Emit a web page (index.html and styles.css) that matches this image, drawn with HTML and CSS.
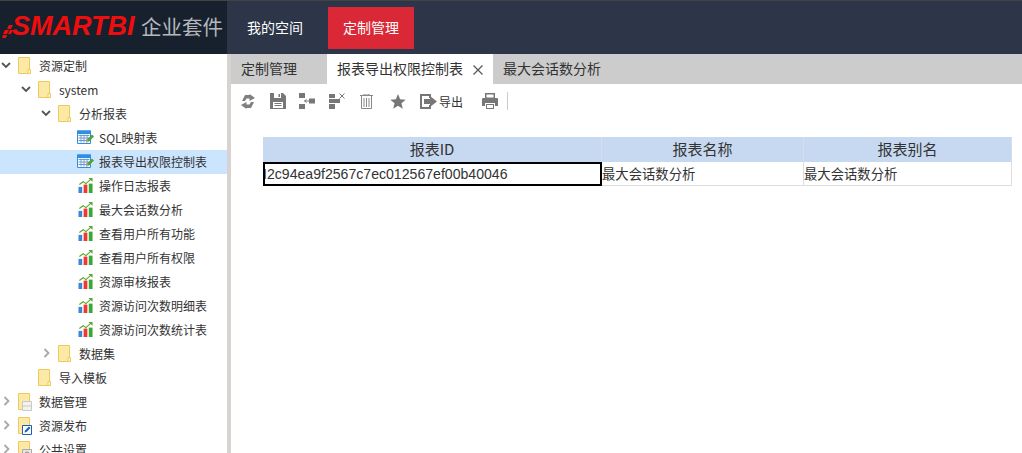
FILE: index.html
```html
<!DOCTYPE html>
<html lang="zh-CN">
<head>
<meta charset="utf-8">
<title>Smartbi</title>
<link rel="stylesheet" href="styles.css">
</head>
<body>
<svg class="defs" width="0" height="0" aria-hidden="true">
  <defs>
    <symbol id="folder" viewBox="0 0 13 17">
      <path d="M.5.5h11v16H.5z" fill="#fde9a6" stroke="#eccb5c"/>
      <path d="M10 12.5h2.500v4H10z" fill="#fff3c9" stroke="#eccb5c"/>
    </symbol>
    <symbol id="grid" viewBox="0 0 17 14">
      <path d="M.5.5h13v12.500H.5z" fill="#fff" stroke="#2e8fe0"/>
      <path d="M0 0h14v3.500H0z" fill="#2e8fe0"/>
      <path d="M1.500 5h11M1.500 7.500h11M1.500 10h11M4 4v8M7 4v8M10 4v8" stroke="#6f9bd6" stroke-width="1"/>
      <path d="M9 12l1-3 5-5 2 2-5 5z" fill="#4aa53a"/>
      <path d="M9 12l1-3 2 2z" fill="#d9a66b"/>
    </symbol>
    <symbol id="chart" viewBox="0 0 15 16">
      <path d="M0 9.500h4V16H0z" fill="#3e86d6"/>
      <path d="M5.500 7h4v9h-4z" fill="#ee3a2e"/>
      <path d="M11 6h4v10h-4z" fill="#3aa53a"/>
      <path d="M1 7l4-3 3 2 5-4.500" fill="none" stroke="#55a82c" stroke-width="1.200"/>
      <path d="M10.500 0H15v4z" fill="#55a82c"/>
    </symbol>
    <symbol id="down" viewBox="0 0 10 6">
      <path d="M1 1l4 4 4-4" fill="none" stroke="#555" stroke-width="1.800"/>
    </symbol>
    <symbol id="right" viewBox="0 0 6 10">
      <path d="M1 1l4 4-4 4" fill="none" stroke="#a8a8a8" stroke-width="1.800"/>
    </symbol>
  </defs>
</svg>

<header class="topbar">
  <div class="brand">
    <svg class="brand-mark" width="14" height="14" viewBox="0 0 14 14" aria-hidden="true">
      <path d="M7 0h4L9 4H5zM3 5h4L5 9H1zM8 5h3L9 9H6zM1 10h4l-1 3H0z" fill="#f00d0d"/>
    </svg>
    <span class="brand-name">SMARTBI</span>
    <span class="brand-suite">企业套件</span>
  </div>
  <nav class="mainnav">
    <a class="mainnav-item">我的空间</a>
    <a class="mainnav-item is-active">定制管理</a>
  </nav>
</header>

<div class="body">
  <aside class="tree">
    <div class="row l0"><svg class="arrow ad"><use href="#down"/></svg><svg class="folder"><use href="#folder"/></svg><span>资源定制</span></div>
    <div class="row l1"><svg class="arrow ad"><use href="#down"/></svg><svg class="folder"><use href="#folder"/></svg><span>system</span></div>
    <div class="row l2"><svg class="arrow ad"><use href="#down"/></svg><svg class="folder"><use href="#folder"/></svg><span>分析报表</span></div>
    <div class="row l3"><svg class="leaf"><use href="#grid"/></svg><span>SQL映射表</span></div>
    <div class="row l3 is-selected"><svg class="leaf"><use href="#grid"/></svg><span>报表导出权限控制表</span></div>
    <div class="row l3"><svg class="leaf"><use href="#chart"/></svg><span>操作日志报表</span></div>
    <div class="row l3"><svg class="leaf"><use href="#chart"/></svg><span>最大会话数分析</span></div>
    <div class="row l3"><svg class="leaf"><use href="#chart"/></svg><span>查看用户所有功能</span></div>
    <div class="row l3"><svg class="leaf"><use href="#chart"/></svg><span>查看用户所有权限</span></div>
    <div class="row l3"><svg class="leaf"><use href="#chart"/></svg><span>资源审核报表</span></div>
    <div class="row l3"><svg class="leaf"><use href="#chart"/></svg><span>资源访问次数明细表</span></div>
    <div class="row l3"><svg class="leaf"><use href="#chart"/></svg><span>资源访问次数统计表</span></div>
    <div class="row l2"><svg class="arrow ar"><use href="#right"/></svg><svg class="folder"><use href="#folder"/></svg><span>数据集</span></div>
    <div class="row l1"><span class="arrow"></span><svg class="folder"><use href="#folder"/></svg><span>导入模板</span></div>
    <div class="row l0"><svg class="arrow ar"><use href="#right"/></svg>
      <span class="stack"><svg class="folder"><use href="#folder"/></svg>
        <svg class="badge" viewBox="0 0 10 10"><path d="M.5.5h9v9h-9z" fill="#f4f2ee" stroke="#c9c9c9"/><path d="M1 5h8" stroke="#c9c9c9"/></svg></span><span>数据管理</span></div>
    <div class="row l0"><svg class="arrow ar"><use href="#right"/></svg>
      <span class="stack"><svg class="folder"><use href="#folder"/></svg>
        <svg class="badge" viewBox="0 0 10 10"><path d="M.5.5h9v9h-9z" fill="#fff" stroke="#1a5fb4"/><path d="M2.500 7.500l.5-2L7 1.500l1.500 1.500-4 4z" fill="#1a5fb4"/></svg></span><span>资源发布</span></div>
    <div class="row l0"><svg class="arrow ar"><use href="#right"/></svg>
      <span class="stack"><svg class="folder"><use href="#folder"/></svg>
        <svg class="badge" viewBox="0 0 10 10"><path d="M.5.5h9v9h-9z" fill="#e6e6e6" stroke="#aaa"/><circle cx="5" cy="5" r="2" fill="none" stroke="#888"/></svg></span><span>公共设置</span></div>
  </aside>
  <div class="splitter"></div>
  <main class="content">
    <div class="tabs">
      <div class="tab">定制管理</div>
      <div class="tab is-active">报表导出权限控制表<svg class="tab-close" width="10" height="10" viewBox="0 0 10 10" aria-hidden="true"><path d="M.5.500l9 9M9.500.500l-9 9" stroke="#555" stroke-width="1.200"/></svg></div>
      <div class="tab">最大会话数分析</div>
    </div>
    <div class="toolbar">
      <svg class="tool t-refresh" width="14" height="15" viewBox="0 0 14 15" aria-hidden="true"><path d="M1 7L4 1h4.500V0L14 4 8.500 7V4.500h-3L4 7zM13 8l-3 6H5.500v1L0 11l5.500-3v2.500h3L10 8z" fill="#808080"/></svg>
      <svg class="tool t-save" width="16" height="16" viewBox="0 0 16 16" aria-hidden="true"><path d="M0 0h13l3 3v13H0z" fill="#777"/><path d="M4 0h7v5H4z" fill="#fff"/><path d="M8.500 1H10v3H8.500z" fill="#777"/><path d="M3 9h10v6H3z" fill="#fff"/><path d="M4.500 10.500h7M4.500 12.500h7" stroke="#777"/></svg>
      <svg class="tool t-merge" width="16" height="16" viewBox="0 0 16 16" aria-hidden="true"><path d="M0 0h6v5H0zM0 11h6v5H0zM10 5.500h6v5h-6z" fill="#777"/><path d="M5.500 8H10M5.500 8l2-1.500M5.500 8l2 1.500" stroke="#777" fill="none"/></svg>
      <svg class="tool t-unmerge" width="16" height="16" viewBox="0 0 16 16" aria-hidden="true"><path d="M0 1h6v4H0zM0 6h11v4H0zM0 11h6v5H0z" fill="#777"/><path d="M10.500.500l5 5M15.500.500l-5 5" stroke="#777"/></svg>
      <svg class="tool t-trash" width="13" height="15" viewBox="0 0 13 15" aria-hidden="true"><path d="M0 1.500h13M4 1V0h5v1M1.500 2v12.500h10V2M4 4v9M6.500 4v9M9 4v9" fill="none" stroke="#888"/></svg>
      <svg class="tool t-star" width="16" height="15" viewBox="0 0 17 16" aria-hidden="true"><path d="M8.500 0l2.300 5.500 5.900.5-4.500 3.900 1.400 5.800-5.100-3.100-5.100 3.100 1.400-5.800L.3 6l5.900-.5z" fill="#777"/></svg>
      <span class="tool t-export">
        <svg width="17" height="15" viewBox="0 0 17 15" aria-hidden="true"><path d="M10 4V1H1v13h9v-3" fill="none" stroke="#777" stroke-width="2"/><path d="M4 5h6V2l7 5.500L10 13v-3H4z" fill="#777"/></svg>
        <span>导出</span>
      </span>
      <svg class="tool t-print" width="16" height="16" viewBox="0 0 16 16" aria-hidden="true"><path d="M3 0h10v5H3zM1 5h14a1 1 0 0 1 1 1v7h-3v-3H3v3H0V6a1 1 0 0 1 1-1zM4 11h8v5H4z" fill="#777"/><path d="M4.500 1.500h7v3h-7zM5 12h6v3H5z" fill="#fff"/></svg>
      <span class="tool-sep"></span>
    </div>
    <div class="sheet">
      <table class="grid">
        <colgroup><col class="c1"><col class="c2"><col class="c3"></colgroup>
        <thead>
          <tr><th>报表ID</th><th>报表名称</th><th>报表别名</th></tr>
        </thead>
        <tbody>
          <tr>
            <td class="cell-current"><div class="cell-clip">I2c94ea9f2567c7ec012567ef00b40046</div></td>
            <td>最大会话数分析</td>
            <td>最大会话数分析</td>
          </tr>
        </tbody>
      </table>
    </div>
  </main>
</div>
</body>
</html>
```

FILE: styles.css
```css
* { box-sizing: border-box; }
html, body { margin: 0; height: 100%; overflow: hidden; }
body {
  width: 1022px;
  height: 453px;
  font-family: "Liberation Sans", "Noto Sans CJK SC", sans-serif;
  font-size: 12px;
  color: #333;
  background: #fff;
  display: flex;
  flex-direction: column;
}
.defs { position: absolute; }

.topbar {
  height: 54px;
  flex: none;
  display: flex;
  background: #2c3648;
  border-top: 1px solid #444;
}
.brand {
  width: 227px;
  flex: none;
  background: #17202d;
  display: flex;
  align-items: center;
  padding: 0 0 3px 2px;
}
.brand-mark { flex: none; margin-top: 11px; margin-right: -4px; }
.brand-name {
  color: #f00d0d;
  font: italic bold 27px "Liberation Sans", sans-serif;
  width: 129px;
  flex: none;
}
.brand-suite {
  color: #b4b8bd;
  font: 20.5px "Noto Sans CJK SC", sans-serif;
  white-space: nowrap;
}
.mainnav { display: flex; padding-top: 6px; }
.mainnav-item {
  width: 86px;
  height: 42px;
  padding-bottom: 3px;
  display: flex;
  align-items: center;
  justify-content: center;
  color: #fff;
  font-size: 14px;
  font-family: "Noto Sans CJK SC", sans-serif;
}
.mainnav-item:first-child { width: 96px; margin-right: 5px; }
.mainnav-item.is-active { background: #db2836; }

.body { flex: 1; display: flex; min-height: 0; }
.tree { width: 227px; flex: none; overflow: hidden; }
.splitter { width: 4px; flex: none; background: #d6d3d0; }
.row {
  height: 24px;
  padding-bottom: 2px;
  display: flex;
  align-items: center;
  white-space: nowrap;
  font-size: 12px;
  font-family: "Noto Sans CJK SC", sans-serif;
  color: #333;
}
.row.l0 { padding-left: 1px; }
.row.l1 { padding-left: 21px; }
.row.l2 { padding-left: 41px; }
.row.l3 { padding-left: 77px; }
.row.is-selected { background: #cce5ff; }
.arrow { width: 10px; height: 10px; flex: none; margin-right: 7px; }
.arrow.ar { width: 7px; margin-left: 2px; margin-right: 8px; }
.folder { width: 13px; height: 17px; flex: none; margin-right: 8px; display: block; }
.leaf { width: 17px; height: 15px; flex: none; margin-right: 5px; }
.stack { position: relative; display: block; flex: none; height: 17px; width: 21px; }
.badge { position: absolute; left: 4px; top: 8px; width: 10px; height: 10px; }

.content { flex: 1; min-width: 0; display: flex; flex-direction: column; }
.tabs { height: 30px; flex: none; display: flex; background: #ccc; }
.tab {
  display: flex;
  align-items: center;
  padding: 0 10px 2px;
  color: #333;
  font-size: 14px;
  font-family: "Noto Sans CJK SC", sans-serif;
  white-space: nowrap;
}
.tab:first-child { width: 96px; }
.tab.is-active { background: #fff; width: 166px; justify-content: space-between; }
.tab-close { margin-top: 3px; }
.toolbar { height: 34px; flex: none; display: flex; align-items: center; padding-left: 10px; }
.tool { flex: none; display: block; }
.t-save { margin-left: 15px; }
.t-merge { margin-left: 13px; }
.t-unmerge { margin-left: 14px; }
.t-trash { margin-left: 15px; }
.t-star { margin-left: 17px; }
.t-export {
  margin-left: 14px;
  display: flex;
  align-items: center;
  gap: 2px;
  font-size: 12px;
  font-family: "Noto Sans CJK SC", sans-serif;
  color: #333;
}
.t-print { margin-left: 19px; }
.tool-sep { width: 1px; height: 18px; margin-left: 9px; background: #ccc; }
.sheet { padding: 19px 10px 0 32px; }
.grid { width: 749px; table-layout: fixed; border-collapse: separate; border-spacing: 0; }
.c1 { width: 339px; }
.c2 { width: 202px; }
.c3 { width: 208px; }
.grid th {
  height: 25px;
  padding: 0 0 2px;
  background: #c6d9f0;
  border-right: 1px solid #d4dfee;
  font-weight: 400;
  font-size: 15px;
  font-family: "Noto Sans CJK SC", sans-serif;
  color: #333;
  text-align: center;
}
.grid td {
  height: 24px;
  padding: 0;
  font-size: 13.33px;
  font-family: "Noto Sans CJK SC", sans-serif;
  color: #333;
  border-right: 1px solid #ddd;
  border-bottom: 1px solid #ddd;
  white-space: nowrap;
  overflow: hidden;
}
.grid td.cell-current { border: 2px solid #000; }
.cell-clip { overflow: hidden; white-space: nowrap; margin-left: -2px; font-family: "Liberation Sans", sans-serif; font-size: 14.1px; }
```
